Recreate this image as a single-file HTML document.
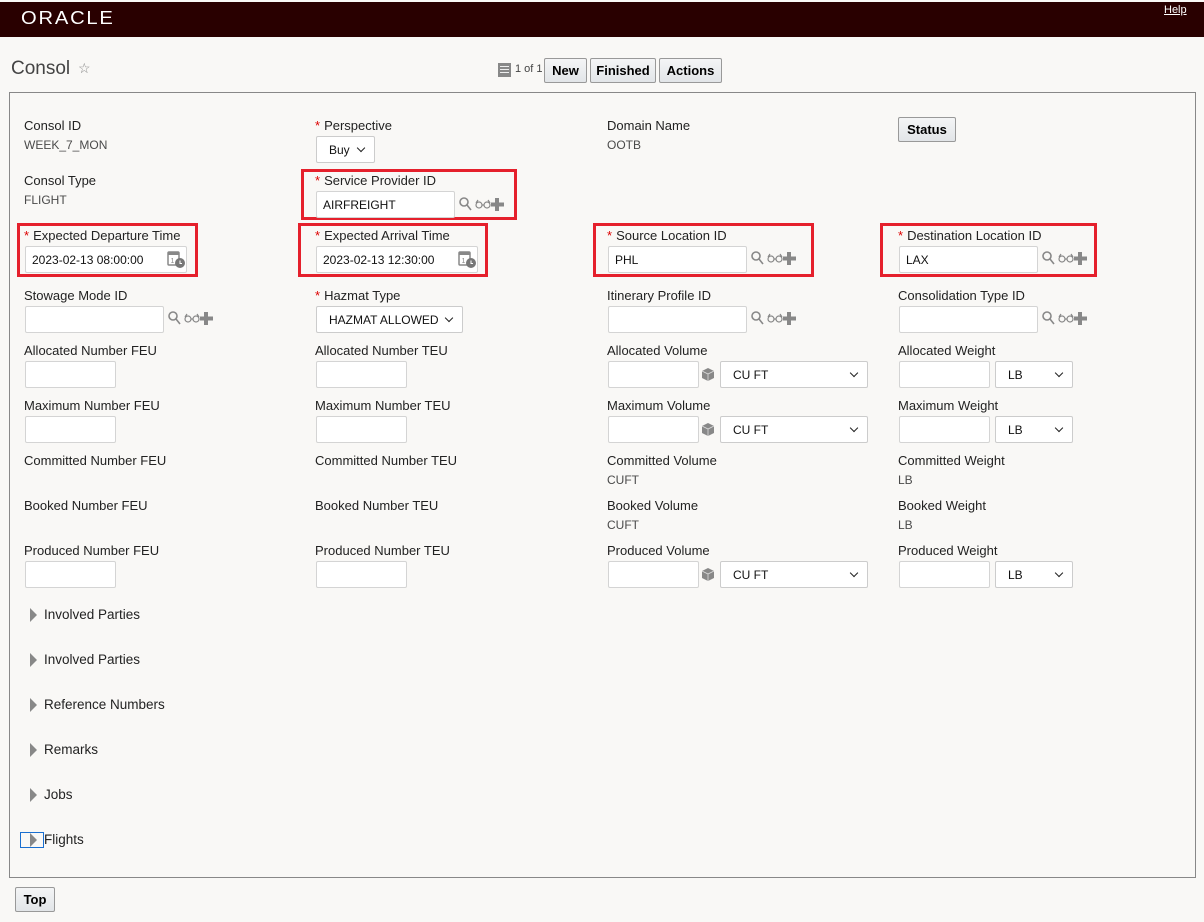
<!DOCTYPE html>
<html><head><meta charset="utf-8"><style>
*{box-sizing:border-box}
body{margin:0;width:1204px;height:922px;background:#f9f8f6;font-family:"Liberation Sans",sans-serif;font-size:13px;color:#222;position:relative;overflow:hidden}
.a{position:absolute}
.hdr{left:0;top:2px;width:1204px;height:35px;background:#290000}
.lbl{position:absolute;font-size:13px;color:#222;white-space:nowrap}
.lbl b{color:#d00;font-weight:normal;margin-right:4px}
.val{position:absolute;font-size:12px;color:#4a4a4a;white-space:nowrap}
.in{position:absolute;height:27px;background:#fff;border:1px solid #d4d4d4;border-radius:2px;font-size:12px;padding:6px 6px;color:#111;white-space:nowrap}
.sel{position:absolute;height:27px;background:#fff;border:1px solid #ccc;border-radius:2px;font-size:12px;padding:6px 12px;color:#111}
.sel:after{content:"";position:absolute;right:10px;top:8px;width:5px;height:5px;border-right:1.5px solid #222;border-bottom:1.5px solid #222;transform:rotate(45deg)}
.btn{position:absolute;height:25px;background:linear-gradient(#f4f5f6,#e2e5e8);border:1px solid #999;border-radius:2px;font-weight:bold;font-size:13px;text-align:center;line-height:23px;color:#000}
.red{position:absolute;border:3px solid #e5202c}
.sec{position:absolute;left:44px;font-size:13.5px;color:#222}
.tri{position:absolute;left:30px;width:0;height:0;border-left:7px solid #888;border-top:7px solid transparent;border-bottom:7px solid transparent}
</style></head><body>
<div class="a hdr"></div>
<div class="a" style="left:21px;top:8px;color:#fff;font-size:18px;letter-spacing:1.6px;transform:scaleX(1.12);transform-origin:left">ORACLE</div>
<div class="a" style="left:1164px;top:4px;color:#fff;font-size:11px;text-decoration:underline">Help</div>

<div class="a" style="left:11px;top:58px;font-size:19px;color:#444">Consol</div>
<div class="a" style="left:78px;top:60px;font-size:14px;color:#888">☆</div>

<div class="a" style="left:498px;top:63px;width:13px;height:14px;background:#888"></div>
<div class="a" style="left:500px;top:66px;width:9px;height:1px;background:#eee;box-shadow:0 3px #eee,0 6px #eee"></div>
<div class="a" style="left:515px;top:63px;font-size:11px;color:#444">1 of 1</div>
<div class="btn" style="left:544px;top:58px;width:43px">New</div>
<div class="btn" style="left:590px;top:58px;width:66px">Finished</div>
<div class="btn" style="left:659px;top:58px;width:63px">Actions</div>

<div class="a" style="left:9px;top:92px;width:1187px;height:786px;border:1px solid #888"></div>

<div class="lbl" style="left:24px;top:118px">Consol ID</div>
<div class="val" style="left:24px;top:138px">WEEK_7_MON</div>
<div class="lbl" style="left:315px;top:118px"><b>*</b>Perspective</div>
<div class="sel" style="left:316px;top:136px;width:59px">Buy</div>
<div class="lbl" style="left:607px;top:118px">Domain Name</div>
<div class="val" style="left:607px;top:138px">OOTB</div>
<div class="btn" style="left:898px;top:117px;width:58px">Status</div>

<div class="lbl" style="left:24px;top:173px">Consol Type</div>
<div class="val" style="left:24px;top:193px">FLIGHT</div>
<div class="red" style="left:301px;top:169px;width:216px;height:51px"></div>
<div class="lbl" style="left:315px;top:173px"><b>*</b>Service Provider ID</div>
<div class="in" style="left:316px;top:191px;width:139px">AIRFREIGHT</div>

<div class="red" style="left:17px;top:223px;width:181px;height:54px"></div>
<div class="lbl" style="left:24px;top:228px"><b>*</b>Expected Departure Time</div>
<div class="in" style="left:25px;top:246px;width:162px">2023-02-13 08:00:00</div>
<div class="red" style="left:298px;top:223px;width:190px;height:54px"></div>
<div class="lbl" style="left:315px;top:228px"><b>*</b>Expected Arrival Time</div>
<div class="in" style="left:316px;top:246px;width:162px">2023-02-13 12:30:00</div>
<div class="red" style="left:593px;top:223px;width:221px;height:54px"></div>
<div class="lbl" style="left:607px;top:228px"><b>*</b>Source Location ID</div>
<div class="in" style="left:608px;top:246px;width:139px">PHL</div>
<div class="red" style="left:880px;top:223px;width:217px;height:54px"></div>
<div class="lbl" style="left:898px;top:228px"><b>*</b>Destination Location ID</div>
<div class="in" style="left:899px;top:246px;width:139px">LAX</div>

<div class="lbl" style="left:24px;top:288px">Stowage Mode ID</div>
<div class="in" style="left:25px;top:306px;width:139px"></div>
<div class="lbl" style="left:315px;top:288px"><b>*</b>Hazmat Type</div>
<div class="sel" style="left:316px;top:306px;width:147px">HAZMAT ALLOWED</div>
<div class="lbl" style="left:607px;top:288px">Itinerary Profile ID</div>
<div class="in" style="left:608px;top:306px;width:139px"></div>
<div class="lbl" style="left:898px;top:288px">Consolidation Type ID</div>
<div class="in" style="left:899px;top:306px;width:139px"></div>

<div class="lbl" style="left:24px;top:343px">Allocated Number FEU</div>
<div class="in" style="left:25px;top:361px;width:91px"></div>
<div class="lbl" style="left:315px;top:343px">Allocated Number TEU</div>
<div class="in" style="left:316px;top:361px;width:91px"></div>
<div class="lbl" style="left:607px;top:343px">Allocated Volume</div>
<div class="in" style="left:608px;top:361px;width:91px"></div>
<div class="sel" style="left:720px;top:361px;width:148px">CU FT</div>
<div class="lbl" style="left:898px;top:343px">Allocated Weight</div>
<div class="in" style="left:899px;top:361px;width:91px"></div>
<div class="sel" style="left:995px;top:361px;width:78px">LB</div>

<div class="lbl" style="left:24px;top:398px">Maximum Number FEU</div>
<div class="in" style="left:25px;top:416px;width:91px"></div>
<div class="lbl" style="left:315px;top:398px">Maximum Number TEU</div>
<div class="in" style="left:316px;top:416px;width:91px"></div>
<div class="lbl" style="left:607px;top:398px">Maximum Volume</div>
<div class="in" style="left:608px;top:416px;width:91px"></div>
<div class="sel" style="left:720px;top:416px;width:148px">CU FT</div>
<div class="lbl" style="left:898px;top:398px">Maximum Weight</div>
<div class="in" style="left:899px;top:416px;width:91px"></div>
<div class="sel" style="left:995px;top:416px;width:78px">LB</div>

<div class="lbl" style="left:24px;top:453px">Committed Number FEU</div>
<div class="lbl" style="left:315px;top:453px">Committed Number TEU</div>
<div class="lbl" style="left:607px;top:453px">Committed Volume</div>
<div class="val" style="left:607px;top:473px">CUFT</div>
<div class="lbl" style="left:898px;top:453px">Committed Weight</div>
<div class="val" style="left:898px;top:473px">LB</div>

<div class="lbl" style="left:24px;top:498px">Booked Number FEU</div>
<div class="lbl" style="left:315px;top:498px">Booked Number TEU</div>
<div class="lbl" style="left:607px;top:498px">Booked Volume</div>
<div class="val" style="left:607px;top:518px">CUFT</div>
<div class="lbl" style="left:898px;top:498px">Booked Weight</div>
<div class="val" style="left:898px;top:518px">LB</div>

<div class="lbl" style="left:24px;top:543px">Produced Number FEU</div>
<div class="in" style="left:25px;top:561px;width:91px"></div>
<div class="lbl" style="left:315px;top:543px">Produced Number TEU</div>
<div class="in" style="left:316px;top:561px;width:91px"></div>
<div class="lbl" style="left:607px;top:543px">Produced Volume</div>
<div class="in" style="left:608px;top:561px;width:91px"></div>
<div class="sel" style="left:720px;top:561px;width:148px">CU FT</div>
<div class="lbl" style="left:898px;top:543px">Produced Weight</div>
<div class="in" style="left:899px;top:561px;width:91px"></div>
<div class="sel" style="left:995px;top:561px;width:78px">LB</div>

<svg class="a" style="left:0;top:0" width="1204" height="922">
<defs>
<g id="lk" fill="none" stroke="#888" stroke-width="1.6">
<circle cx="5" cy="5" r="4"/><line x1="8" y1="8" x2="12" y2="13"/>
<circle cx="20" cy="8" r="3" stroke-width="1.2"/><circle cx="28" cy="8" r="3" stroke-width="1.2"/>
<path d="M17 6 l2 -3 M31 6 l-2 -3 M23 8 h2" stroke-width="1.2"/>
<path d="M38 1 v13 M32 7.5 h13" stroke-width="4"/>
</g>
<g id="cal"><rect x="0" y="1" width="11" height="13" rx="1" fill="none" stroke="#888" stroke-width="1.5"/><rect x="0" y="1" width="11" height="3" fill="#888"/><text x="2.5" y="12" font-size="7" fill="#888" font-family="Liberation Sans">1</text><circle cx="12" cy="12" r="5" fill="#777"/><path d="M12 9.5v3h2" stroke="#fff" fill="none"/></g>
<g id="box"><path d="M6 0 L12 3 V10 L6 13 L0 10 V3 Z" fill="#888"/><path d="M0 3 L6 6 L12 3 M6 6 V13" stroke="#ddd" fill="none" stroke-width="0.8"/></g>
</defs>
<use href="#lk" x="459" y="197"/>
<use href="#lk" x="751" y="251"/>
<use href="#lk" x="1042" y="251"/>
<use href="#lk" x="168" y="311"/>
<use href="#lk" x="751" y="311"/>
<use href="#lk" x="1042" y="311"/>
<use href="#cal" x="168" y="251"/>
<use href="#cal" x="459" y="251"/>
<use href="#box" x="702" y="368"/>
<use href="#box" x="702" y="423"/>
<use href="#box" x="702" y="568"/>
</svg>

<div class="tri" style="top:608px"></div><div class="sec" style="top:607px">Involved Parties</div>
<div class="tri" style="top:653px"></div><div class="sec" style="top:652px">Involved Parties</div>
<div class="tri" style="top:698px"></div><div class="sec" style="top:697px">Reference Numbers</div>
<div class="tri" style="top:743px"></div><div class="sec" style="top:742px">Remarks</div>
<div class="tri" style="top:788px"></div><div class="sec" style="top:787px">Jobs</div>
<div class="a" style="left:20px;top:832px;width:24px;height:16px;border:1px solid #1a6fd0"></div>
<div class="tri" style="top:833px"></div><div class="sec" style="top:832px">Flights</div>

<div class="btn" style="left:15px;top:887px;width:40px;height:25px">Top</div>
</body></html>
